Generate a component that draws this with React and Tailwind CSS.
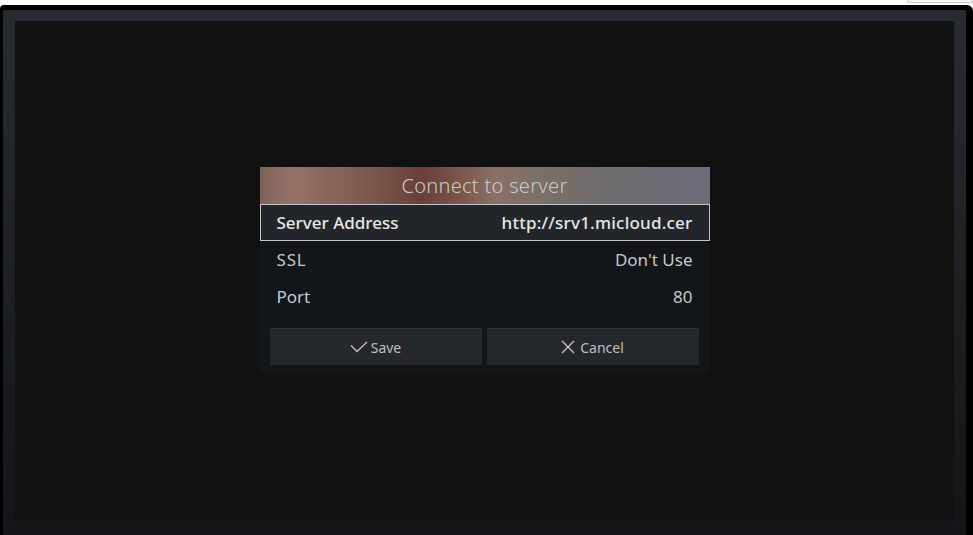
export default function App() {
  const font = { fontFamily: '"Noto Sans", "Open Sans", sans-serif' };
  return (
    <div className="w-[973px] h-[535px] bg-white flex flex-col overflow-hidden" style={font}>
      <div className="h-[5px] flex justify-end">
        <div className="w-[66px] h-[3px] bg-[#f2f2f2] border-x border-b border-[#c9c9c9] rounded-bl-[3px]" />
      </div>
      <div className="flex-1 bg-black rounded-tl-[4px] rounded-tr-[6px] pt-[5px] pl-[3px] pr-[7px] flex">
        <div className="flex-1 bg-gradient-to-b from-[#282b30] to-[#131518] pt-[11px] pl-[12px] pr-[12px] pb-[14px] flex">
          <div className="flex-1 bg-[#111111] flex items-center justify-center">
            <div className="w-[450px] bg-[#121619] flex flex-col mb-[2px]">
              <div
                className="h-[37px] flex items-center justify-center text-[20px] font-light text-[#cacaca] tracking-[0.3px]"
                style={{
                  backgroundImage:
                    'linear-gradient(to right, #7c6259 0%, #967266 7%, #7e5c52 22%, #693f37 36%, #7a5548 44%, #8c7064 52%, #7a7068 62%, #6c6a6c 78%, #6c6b7a 100%)',
                }}
              >
                Connect to server
              </div>
              <div className="h-[37px] border-[1.5px] border-[#c4c6c8] bg-[#22262a] flex items-center justify-between px-[16px] text-[17px] font-medium text-[#e6e6e6]">
                <span>Server Address</span>
                <span className="tracking-[0.22px]">http://srv1.micloud.cer</span>
              </div>
              <div className="h-[37px] flex items-center justify-between px-[17px] text-[17px] text-[#c8c8c8]">
                <span className="tracking-[0.8px]">SSL</span>
                <span>Don't Use</span>
              </div>
              <div className="h-[37px] flex items-center justify-between px-[17px] text-[17px] text-[#c8c8c8]">
                <span>Port</span>
                <span>80</span>
              </div>
              <div className="flex gap-[5px] pl-[10px] pr-[11px] pt-[13px] pb-[8px]">
                <div className="flex-1 h-[37px] bg-[#24282c] border-t border-[#2e3236] flex items-center justify-center gap-[3px] text-[14px] text-[#bfbfbf]">
                  <svg width="18" height="12" viewBox="0 0 18 12" fill="none" stroke="#c4c4c4" strokeWidth="1.3">
                    <path d="M1 4.5 L7 10.5 L17 1" />
                  </svg>
                  <span>Save</span>
                </div>
                <div className="flex-1 h-[37px] bg-[#24282c] border-t border-[#2e3236] flex items-center justify-center gap-[5px] text-[14px] text-[#bfbfbf]">
                  <svg width="14" height="14" viewBox="0 0 14 14" fill="none" stroke="#c4c4c4" strokeWidth="1.3">
                    <path d="M1 1 L13 13 M13 1 L1 13" />
                  </svg>
                  <span>Cancel</span>
                </div>
              </div>
            </div>
          </div>
        </div>
      </div>
    </div>
  );
}
